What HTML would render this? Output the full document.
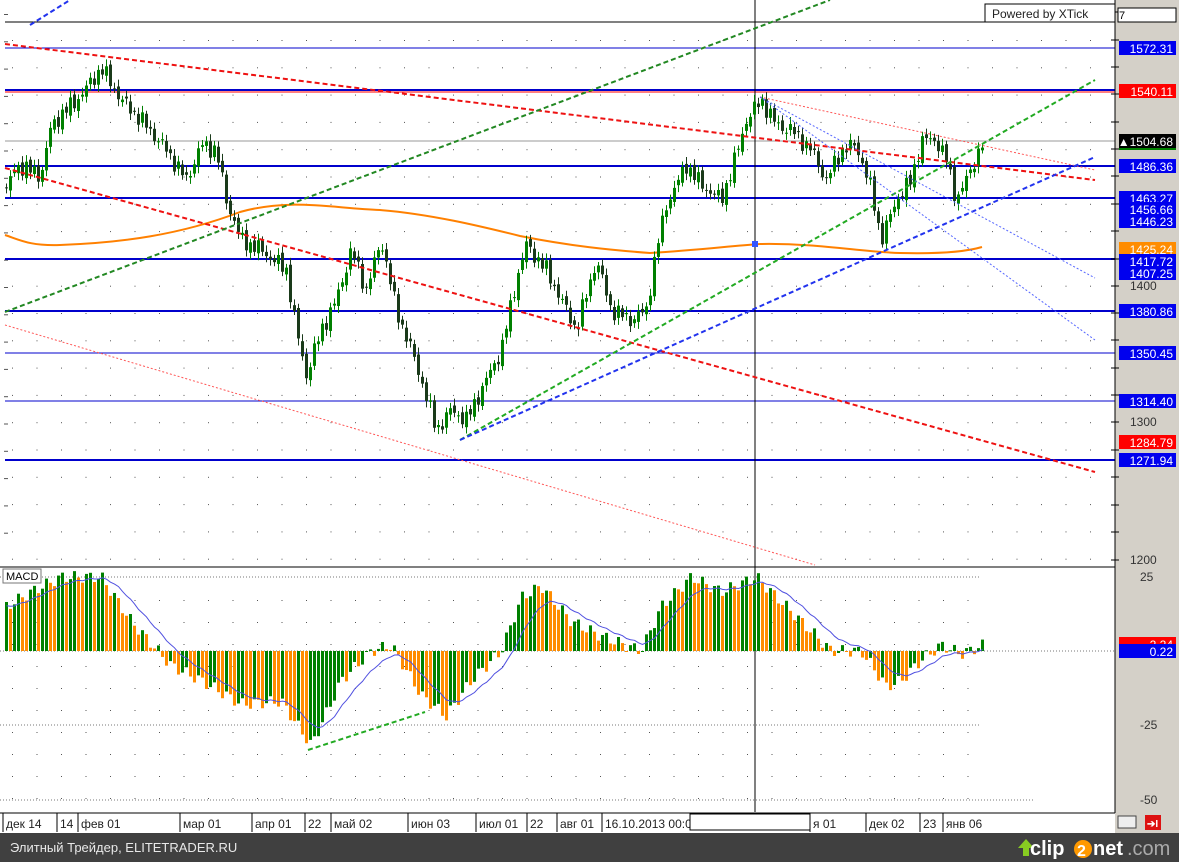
<!DOCTYPE html>
<html><head><meta charset="utf-8"><style>
html,body{margin:0;padding:0;width:1179px;height:862px;overflow:hidden;background:#fff;font-family:"Liberation Sans",sans-serif}
svg{display:block}
</style></head><body>
<svg id="s" width="1179" height="862" xmlns="http://www.w3.org/2000/svg" font-family="Liberation Sans, sans-serif">
<rect width="1179" height="862" fill="#fff"/>
<g id="grid"></g>
<g id="hl"></g>
<g id="ma"></g>
<g id="cand"></g>
<g id="macd"></g>
<g id="lines"></g>
<g id="axis"></g>
</svg>
<script>
const NS="http://www.w3.org/2000/svg";
function el(p,t,a,txt){const e=document.createElementNS(NS,t);for(const k in a)e.setAttribute(k,a[k]);if(txt!=null)e.textContent=txt;document.getElementById(p).appendChild(e);return e;}
function interp(pts,x){for(let i=0;i<pts.length-1;i++){if(x>=pts[i][0]&&x<=pts[i+1][0]){const t=(x-pts[i][0])/(pts[i+1][0]-pts[i][0]);return pts[i][1]+t*(pts[i+1][1]-pts[i][1]);}}return x<pts[0][0]?pts[0][1]:pts[pts.length-1][1];}
// grid dots
for(let y=40;y<560;y+=27.3)for(let x=12;x<1110;x+=24.5)el("grid","rect",{x:x,y:y,width:1,height:1,fill:"#555"});
for(let y=600;y<800;y+=22)for(let x=12;x<980;x+=24.5)el("grid","rect",{x:x,y:y,width:1,height:1,fill:"#555"});
// left ticks
for(let y=14;y<560;y+=27.3)el("grid","rect",{x:4,y:y,width:4,height:1,fill:"#555"});
// horizontal lines
const H=[[22,"#000",1],[48,"#0000cc",1],[90,"#0000cc",2],[92,"#ff0000",1],[141,"#999",1],[166,"#0000cc",2],[198,"#0000cc",2],[259,"#0000cc",2],[311,"#0000cc",2],[353,"#0000cc",1],[401,"#0000cc",1],[460,"#0000cc",2]];
H.forEach(h=>el("hl","line",{x1:5,x2:1115,y1:h[0],y2:h[0],stroke:h[1],"stroke-width":h[2]}));
el("hl","line",{x1:0,x2:1115,y1:567,y2:567,stroke:"#000"});
el("hl","line",{x1:0,x2:980,y1:577,y2:577,stroke:"#777","stroke-dasharray":"1 2"});
el("hl","line",{x1:0,x2:1115,y1:651,y2:651,stroke:"#777","stroke-dasharray":"1 2"});
el("hl","line",{x1:0,x2:980,y1:725,y2:725,stroke:"#777","stroke-dasharray":"1 2"});
el("hl","line",{x1:0,x2:1035,y1:800,y2:800,stroke:"#777","stroke-dasharray":"1 2"});
el("hl","line",{x1:755,x2:755,y1:0,y2:812,stroke:"#000"});
// MA
el("ma","path",{d:"M5,235 C20,240 30,246 60,245 C120,243 180,235 240,212 C290,198 330,208 380,210 C430,214 480,226 520,236 C570,246 610,250 650,253 C700,250 730,246 760,244 C820,243 860,252 900,253 C940,254 965,252 982,247",fill:"none",stroke:"#ff8000","stroke-width":2});
el("ma","rect",{x:752,y:241,width:6,height:6,fill:"#3355ff"});
// candles
const P=[[5,190],[15,165],[40,175],[50,125],[80,95],[100,68],[120,100],[140,120],[165,150],[185,180],[200,145],[215,150],[225,200],[240,240],[260,250],[285,270],[295,330],[305,375],[320,330],[335,300],[350,250],[365,290],[380,240],[395,310],[410,350],[420,380],[435,430],[450,410],[465,420],[480,390],[500,350],[515,280],[525,245],[545,270],[560,300],[575,330],[595,260],[610,310],[630,320],[645,310],[655,250],[665,205],[685,165],[700,185],[720,200],[735,155],[745,120],[760,100],[775,125],[790,130],[810,150],[825,180],[840,150],[855,145],[870,190],[880,240],[895,200],[910,180],[920,140],[935,140],[945,160],[955,200],[965,180],[980,145]];
let prev=interp(P,5);
for(let x=5;x<=982;x+=4){
 const c=interp(P,x)+6*Math.sin(x*0.7)+4*Math.sin(x*1.9);
 const o=prev+3*Math.sin(x*2.3);
 const top=Math.min(o,c),bot=Math.max(o,c);
 const hi=top-3-4*Math.abs(Math.sin(x*1.3)),lo=bot+3+4*Math.abs(Math.cos(x*1.1));
 const up=c<o;const col=up?"#008000":"#1a3a1a";
 el("cand","line",{x1:x+1.5,x2:x+1.5,y1:hi,y2:lo,stroke:col,"stroke-width":1});
 el("cand","rect",{x:x,y:top,width:3,height:Math.max(1,bot-top),fill:col});
 prev=c;
}
// MACD
const M=[[5,15],[30,20],[60,25],[100,25],[130,10],[170,-5],[200,-10],[240,-18],[280,-17],[310,-32],[340,-10],[370,0],[390,2],[420,-15],[445,-22],[470,-10],[500,0],[520,18],[540,22],[570,10],[600,5],[640,0],[660,15],[690,25],[720,20],[755,25],[770,20],[800,10],[830,0],[860,0],[885,-12],[900,-10],[920,-3],[940,2],[960,-1],[982,2]];
let pv=interp(M,1);const sig=[];let s=interp(M,5);
for(let x=5;x<=982;x+=4){
 const v=interp(M,x)+2*Math.sin(x*0.45);
 const y=651-v*2.96;
 const col=v>pv?"#008000":"#ff8c00";
 el("macd","rect",{x:x,y:Math.min(y,651),width:3,height:Math.max(1,Math.abs(651-y)),fill:col});
 s=s+(v-s)*0.18;sig.push(x+1.5+","+(651-s*2.96).toFixed(1));
 pv=v;
}
el("macd","polyline",{points:sig.join(" "),fill:"none",stroke:"#5050e0","stroke-width":1});
el("macd","rect",{x:3,y:569,width:38,height:14,fill:"#fff",stroke:"#777"});
el("macd","text",{x:6,y:580,"font-size":11},"MACD");
el("macd","line",{x1:308,y1:750,x2:425,y2:712,stroke:"#22aa22","stroke-width":2,"stroke-dasharray":"5 3"});
// trend lines
function L(x1,y1,x2,y2,c,w,d){el("lines","line",{x1,y1,x2,y2,stroke:c,"stroke-width":w,"stroke-dasharray":d});}
L(5,44,1095,180,"#ee1111",2,"5 3");
L(5,168,1095,472,"#ee1111",2,"5 3");
L(5,325,815,565,"#ff5555",1,"2 2");
L(760,97,1095,170,"#ff5555",1,"2 2");
L(5,312,830,0,"#228822",2,"5 3");
L(460,440,1095,80,"#22aa22",2,"5 3");
L(460,440,1095,157,"#2233ee",2,"5 3");
L(30,25,70,0,"#2233ee",2,"5 3");
L(760,97,1095,278,"#5566ff",1,"2 2");
L(760,97,1095,340,"#5566ff",1,"2 2");
// right axis
el("axis","rect",{x:1115,y:0,width:64,height:813,fill:"#d4d0c8"});
el("axis","line",{x1:1115,x2:1115,y1:0,y2:813,stroke:"#000"});
[12,40,67,94,122,149,176,204,231,259,286,313,340,368,395,422,450,477,505,532,560].forEach(y=>el("axis","line",{x1:1111,x2:1119,y1:y,y2:y,stroke:"#000"}));
[[1600,16],[1400,290],[1300,426],[1200,564]].forEach(a=>el("axis","text",{x:1130,y:a[1],"font-size":12,fill:"#333"},a[0]));
[["25",581],["-25",729],["-50",804]].forEach(a=>el("axis","text",{x:1140,y:a[1],"font-size":12,fill:"#333"},a[0]));
el("axis","rect",{x:1118,y:8,width:58,height:14,fill:"#fff",stroke:"#000"});
el("axis","text",{x:1119,y:19,"font-size":11},"7");
const B=[[48,"1572.31","#0000ee"],[91,"1540.11","#ff0000"],[141,"1504.68","#000"],[166,"1486.36","#0000ee"],[198,"1463.27","#0000ee"],[209,"1456.66","#0000ee"],[221,"1446.23","#0000ee"],[249,"1425.24","#ff8c00"],[261,"1417.72","#0000ee"],[273,"1407.25","#0000ee"],[311,"1380.86","#0000ee"],[353,"1350.45","#0000ee"],[401,"1314.40","#0000ee"],[442,"1284.79","#ff0000"],[460,"1271.94","#0000ee"],[644,"2.24","#ff0000"],[651,"0.22","#0000ee"]];
B.forEach(b=>{el("axis","rect",{x:1119,y:b[0]-7,width:57,height:14,fill:b[2]});el("axis","text",{x:1173,y:b[0]+5,"font-size":12,fill:"#fff","text-anchor":"end"},(b[1]=="1504.68"?"▲":"")+b[1]);});
el("axis","rect",{x:1119,y:148,width:57,height:2,fill:"#008000"});
// powered by box
el("axis","rect",{x:985,y:4,width:130,height:18,fill:"#fff",stroke:"#000"});
el("axis","text",{x:992,y:18,"font-size":12,fill:"#222"},"Powered by XTick");
// date axis
el("axis","rect",{x:0,y:813,width:1179,height:20,fill:"#fff"});
el("axis","rect",{x:1115,y:813,width:64,height:20,fill:"#d4d0c8"});
el("axis","line",{x1:0,x2:1115,y1:813,y2:813,stroke:"#000"});
const D=[[3,"дек 14"],[57,"14"],[78,"фев 01"],[180,"мар 01"],[252,"апр 01"],[305,"22"],[331,"май 02"],[408,"июн 03"],[476,"июл 01"],[527,"22"],[557,"авг 01"],[602,"16.10.2013 00:00"],[810,"я 01"],[866,"дек 02"],[920,"23"],[943,"янв 06"]];
D.forEach(d=>{el("axis","line",{x1:d[0],x2:d[0],y1:813,y2:832,stroke:"#000"});el("axis","text",{x:d[0]+3,y:828,"font-size":12,fill:"#222"},d[1]);});
el("axis","rect",{x:690,y:814,width:120,height:16,fill:"#fff",stroke:"#000"});
el("axis","rect",{x:1118,y:816,width:18,height:12,fill:"#eee",stroke:"#444"});
el("axis","rect",{x:1145,y:815,width:16,height:15,fill:"#dd1111"});
el("axis","text",{x:1147,y:827,"font-size":10,fill:"#fff","font-weight":"bold"},"➔I");
// footer
el("axis","rect",{x:0,y:833,width:1179,height:29,fill:"#404040"});
el("axis","text",{x:10,y:852,"font-size":13,fill:"#e8e8e8"},"Элитный Трейдер, ELITETRADER.RU");
el("axis","path",{d:"M1018,848 l8,-9 l8,9 h-5 v8 h-6 v-8z",fill:"#88cc22"});
el("axis","text",{x:1030,y:855,"font-size":20,fill:"#fff","font-weight":"bold"},"clip");
el("axis","circle",{cx:1083,cy:849,r:9,fill:"#ff9900"});
el("axis","text",{x:1077,y:856,"font-size":16,fill:"#fff","font-weight":"bold"},"2");
el("axis","text",{x:1093,y:855,"font-size":20,fill:"#fff","font-weight":"bold"},"net");
el("axis","text",{x:1127,y:855,"font-size":20,fill:"#aaa"},".com");
</script>
</body></html>
